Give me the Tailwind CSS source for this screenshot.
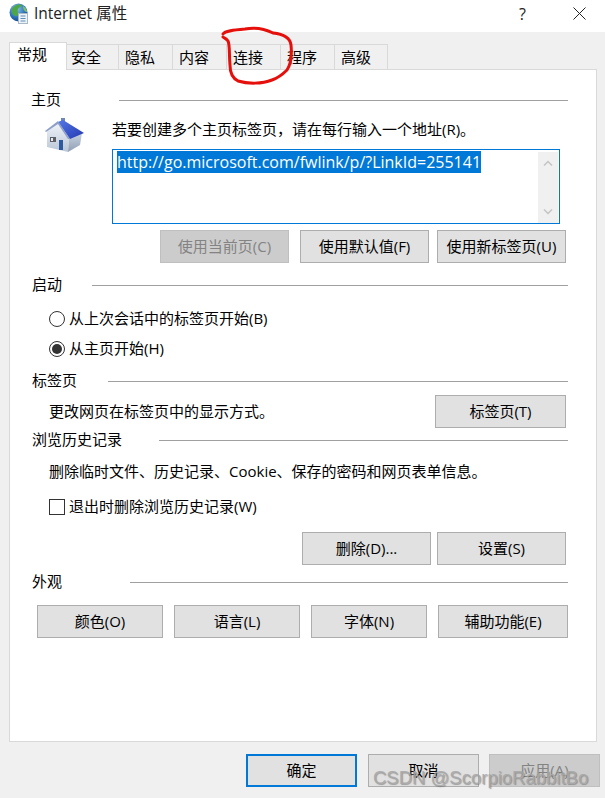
<!DOCTYPE html>
<html lang="zh-CN">
<head>
  <meta charset="UTF-8" />
  <title>Internet 属性</title>
  <script src="https://cdn.jsdelivr.net/npm/@tailwindcss/browser@4"></script>
</head>
<body class="relative w-[605px] h-[798px] overflow-hidden bg-[#f0f0f0] text-[15px] text-black font-['Open_Sans','Noto_Sans_CJK_SC',sans-serif]">

  <!-- 标题栏 -->
  <header class="h-[32px] bg-white flex items-center pl-[9px]">
    <svg class="w-[20px] h-[22px] mb-[5px]" viewBox="0 0 20 22">
      <defs>
        <radialGradient id="globe" cx="0.4" cy="0.3" r="0.8"><stop offset="0" stop-color="#8cc4ee"/><stop offset="0.6" stop-color="#2a6fb5"/><stop offset="1" stop-color="#123f78"/></radialGradient>
      </defs>
      <circle cx="9.500" cy="9.500" r="9" fill="url(#globe)"/>
      <path d="M3 6C5 2 10 0.500 13 2C12 4 10 4 9 6C8 9 10 10 8 13C5 14 2 10 3 6Z" fill="#4fa644"/>
      <path d="M14 3C16 4 18 6 18 9C16 9 14 7 14 3Z" fill="#7cc06a"/>
      <rect x="9.500" y="10.500" width="9" height="10" fill="#eef3f8" stroke="#a9b8c6"/>
      <path d="M11.500 13h5M11.500 15.500h5M11.500 18h5" stroke="#5a8dba"/>
    </svg>
    <span class="ml-[5px] pb-[4px] text-[15.500px] text-[#222]">Internet 属性</span>
    <span class="ml-auto pb-[4px] text-[16px] text-[#222] mr-[47px]">?</span>
    <svg class="w-[13px] h-[13px] mb-[5px] mr-[19px]" viewBox="0 0 13 13"><path d="M0.500 0.500L12.500 12.500M12.500 0.500L0.500 12.500" stroke="#222" fill="none"/></svg>
  </header>

  <!-- 选项卡 -->
  <nav class="h-[37px] pl-[9px] flex items-end">
    <div class="relative z-10 w-[58px] h-[28px] -mb-px bg-white border border-b-0 border-[#d9d9d9] pl-[7px] leading-[22px]">常规</div>
    <div class="w-[52px] h-[25px] border-r border-t border-[#d9d9d9] pl-[4px] leading-[25px]">安全</div>
    <div class="w-[54px] h-[25px] border-r border-t border-[#d9d9d9] pl-[6px] leading-[25px]">隐私</div>
    <div class="w-[54px] h-[25px] border-r border-t border-[#d9d9d9] pl-[6px] leading-[25px]">内容</div>
    <div class="w-[54px] h-[25px] border-r border-t border-[#d9d9d9] pl-[6px] leading-[25px]">连接</div>
    <div class="w-[54px] h-[25px] border-r border-t border-[#d9d9d9] pl-[6px] leading-[25px]">程序</div>
    <div class="w-[53px] h-[25px] border-r border-t border-[#d9d9d9] pl-[6px] leading-[25px]">高级</div>
  </nav>

  <!-- 内容面板 -->
  <main class="ml-[9px] w-[588px] h-[673px] bg-white border border-[#d9d9d9] pl-[21px] pr-[28px] pt-[20px]">

    <div class="flex items-center h-[20px]">
      <span class="w-[88px] pb-[2px]">主页</span>
      <i class="flex-1 h-px bg-[#a0a0a0]"></i>
    </div>
    <div class="flex">
      <div class="w-[81px] pl-[14px] pt-[4px]">
        <svg class="w-[42px] h-[40px]" viewBox="45 114 42 40">
          <defs>
            <linearGradient id="front" x1="0" y1="0" x2="0" y2="1"><stop offset="0" stop-color="#f2f5f9"/><stop offset="1" stop-color="#b9c6d6"/></linearGradient>
            <linearGradient id="side" x1="0" y1="0" x2="0" y2="1"><stop offset="0" stop-color="#c9d3e0"/><stop offset="1" stop-color="#8f9fb4"/></linearGradient>
            <linearGradient id="roof" x1="0" y1="0" x2="1" y2="1"><stop offset="0" stop-color="#5577e6"/><stop offset="1" stop-color="#2238b0"/></linearGradient>
          </defs>
          <rect x="61" y="118" width="4" height="4" fill="#6f86b8"/>
          <path d="M47 131L58 122L69 138L68 152L47 147Z" fill="url(#front)"/>
          <path d="M69 138L82 133L80 145L68 152Z" fill="url(#side)"/>
          <path d="M58 122L63 120L84 133L70 139Z" fill="url(#roof)"/>
          <path d="M45 131L58 121L70 139L68 139L58 124L46 132Z" fill="#8fa0c8"/>
          <rect x="50" y="137" width="6" height="5" fill="#5c5f66"/>
          <rect x="51" y="138" width="2" height="3" fill="#e6e9ee"/>
          <rect x="59" y="140" width="4" height="10" fill="#2d5a9e"/>
        </svg>
      </div>
      <div class="flex-1">
        <p class="h-[39px] pt-[8px] leading-[22px]">若要创建多个主页标签页，请在每行输入一个地址(R)。</p>
        <div class="w-[448px] h-[75px] border border-[#0078d7] flex pl-[4px] pt-[2px] pr-px">
          <div class="flex-1 text-[16px] leading-[20px]"><span class="bg-[#0078d7] text-white">http://go.microsoft.com/fwlink/p/?LinkId=255141</span></div>
          <div class="w-[20px] h-[71px] bg-[#f0f0f0] flex flex-col justify-between items-center py-[8px]">
            <svg class="w-[10px] h-[6px]" viewBox="0 0 10 6"><path d="M1 5.500L5 1.500L9 5.500" fill="none" stroke="#c4c4c4" stroke-width="1.500"/></svg>
            <svg class="w-[10px] h-[6px]" viewBox="0 0 10 6"><path d="M1 0.500L5 4.500L9 0.500" fill="none" stroke="#c4c4c4" stroke-width="1.500"/></svg>
          </div>
        </div>
        <div class="flex justify-end gap-[8px] mt-[6px] pr-[2px]">
          <button class="w-[129px] h-[33px] mr-[3px] bg-[#cccccc] border border-[#bfbfbf] text-[#838383]">使用当前页(C)</button>
          <button class="w-[129px] h-[33px] bg-[#e1e1e1] border border-[#adadad]">使用默认值(F)</button>
          <button class="w-[129px] h-[33px] bg-[#e1e1e1] border border-[#adadad]">使用新标签页(U)</button>
        </div>
      </div>
    </div>

    <div class="flex items-center h-[20px] mt-[12px]">
      <span class="w-[61px] pl-px pb-[2px]">启动</span>
      <i class="flex-1 h-px bg-[#a0a0a0]"></i>
    </div>
    <label class="flex items-center h-[20px] mt-[14px] pl-[18px]">
      <span class="w-[16px] h-[16px] rounded-full border border-[#333] bg-white"></span>
      <span class="ml-[4px] pb-[2px]">从上次会话中的标签页开始(B)</span>
    </label>
    <label class="flex items-center h-[20px] mt-[10px] pl-[18px]">
      <span class="w-[16px] h-[16px] rounded-full border border-[#333] bg-white flex items-center justify-center"><i class="w-[10px] h-[10px] rounded-full bg-[#333]"></i></span>
      <span class="ml-[4px] pb-[2px]">从主页开始(H)</span>
    </label>

    <div class="flex items-center h-[20px] mt-[12px]">
      <span class="w-[77px] pl-px pb-[2px]">标签页</span>
      <i class="flex-1 h-px bg-[#a0a0a0]"></i>
    </div>
    <div class="flex items-center justify-between mt-[4px] pl-[18px] pr-[2px]">
      <span>更改网页在标签页中的显示方式。</span>
      <button class="w-[131px] h-[33px] bg-[#e1e1e1] border border-[#adadad]">标签页(T)</button>
    </div>

    <div class="flex items-center h-[20px] mt-[2px]">
      <span class="w-[128px] pl-px pb-[2px]">浏览历史记录</span>
      <i class="flex-1 h-px bg-[#a0a0a0]"></i>
    </div>
    <p class="h-[20px] leading-[18px] mt-[12px] pl-[18px]">删除临时文件、历史记录、Cookie、保存的密码和网页表单信息。</p>
    <label class="flex items-center h-[20px] mt-[15px] pl-[18px]">
      <span class="w-[16px] h-[16px] border border-[#333] bg-white"></span>
      <span class="ml-[4px] pb-[2px]">退出时删除浏览历史记录(W)</span>
    </label>
    <div class="flex justify-end gap-[6px] mt-[15px] pr-[2px]">
      <button class="w-[129px] h-[33px] bg-[#e1e1e1] border border-[#adadad]">删除(D)...</button>
      <button class="w-[129px] h-[33px] bg-[#e1e1e1] border border-[#adadad]">设置(S)</button>
    </div>

    <div class="flex items-center h-[20px] mt-[7px]">
      <span class="w-[99px] pl-px pb-[2px]">外观</span>
      <i class="flex-1 h-px bg-[#a0a0a0]"></i>
    </div>
    <div class="flex gap-[11px] mt-[13px] pl-[6px]">
      <button class="w-[126px] h-[33px] bg-[#e1e1e1] border border-[#adadad]">颜色(O)</button>
      <button class="w-[126px] h-[33px] bg-[#e1e1e1] border border-[#adadad]">语言(L)</button>
      <button class="w-[116px] h-[33px] bg-[#e1e1e1] border border-[#adadad]">字体(N)</button>
      <button class="w-[130px] h-[33px] bg-[#e1e1e1] border border-[#adadad]">辅助功能(E)</button>
    </div>
  </main>

  <!-- 底部按钮 -->
  <footer class="flex justify-end gap-[11px] mt-[12px] pr-[5px]">
    <button class="w-[111px] h-[33px] bg-[#e1e1e1] border-2 border-[#0078d7]">确定</button>
    <button class="w-[111px] h-[33px] bg-[#e1e1e1] border border-[#adadad]">取消</button>
    <button class="w-[111px] h-[33px] -ml-px bg-[#cccccc] border border-[#bfbfbf] text-[#838383]">应用(A)</button>
  </footer>

  <!-- 红色圈注 -->
  <svg class="absolute left-0 top-0 w-[605px] h-[100px] pointer-events-none" viewBox="0 0 605 100">
    <path d="M223 34C225 31 233 30 245 29C255 27 265 29 273 33C283 34 290 37 291 45C292 55 291 64 287 70C282 75 278 78 272 80C262 84 248 84 238 81C232 78 230 72 230 65C229 55 230 45 228 41C226 38 224 38 223 37" fill="none" stroke="#e5100c" stroke-width="3" stroke-linecap="round"/>
  </svg>

  <!-- 水印 -->
  <span class="absolute left-[373px] top-[766px] text-[18.500px] leading-[24px] text-[#a8a8a8]/90 [text-shadow:1px_1px_1px_rgba(90,90,90,0.5)] font-['Liberation_Sans',sans-serif]">CSDN @ScorpioRabbitBo</span>

</body>
</html>
